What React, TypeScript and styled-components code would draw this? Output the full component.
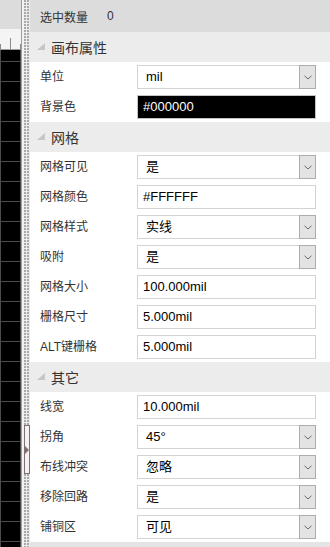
import React from "react";
import styled, { createGlobalStyle } from "styled-components";

const Global = createGlobalStyle`
  html, body { margin: 0; padding: 0; background: #ffffff; }
  body { font-family: "Liberation Sans", "Noto Sans CJK SC", sans-serif; }
  * { box-sizing: border-box; }
`;

const Shell = styled.div`
  display: flex;
  width: 330px;
  height: 547px;
  overflow: hidden;
  background: #ffffff;
`;

const Canvas = styled.div`
  width: 21px;
  display: flex;
  flex-direction: column;
  flex: none;
`;

const CanvasTop = styled.div`
  height: 29px;
  background: #dcdcdc;
`;

const Ruler = styled.div`
  height: 21px;
  background: #f4f4f4;
  border-bottom: 1px solid #9a9a9a;
  display: block;
`;

const Board = styled.div`
  flex: 1;
  background-color: #000000;
  background-image:
    linear-gradient(to bottom, #4c4c4c 0, #4c4c4c 1px, transparent 1px),
    linear-gradient(to right, #4c4c4c 0, #4c4c4c 1px, transparent 1px);
  background-size: 20px 20px, 20px 20px;
  background-position: 0 11px, 20px 0;
`;

const Divider = styled.div`
  width: 1px;
  flex: none;
  background: #9c9c9c;
`;

const Gap = styled.div`
  width: 2px;
  flex: none;
  background: #f2f2f2;
`;

const Splitter = styled.div`
  position: relative;
  width: 6px;
  flex: none;
  background-color: #ececec;
  background-image: radial-gradient(circle at 1px 1px, #a9a9a9 0.75px, transparent 0.9px);
  background-size: 3px 3px;
`;

const Handle = styled.div`
  position: absolute;
  left: 0;
  top: 425px;
  width: 6px;
  height: 49px;
  border: 1px solid #7c7070;
  background: #f6f0f0;
  display: flex;
  align-items: center;
  justify-content: center;
`;

const Panel = styled.div`
  flex: 1;
  display: flex;
  flex-direction: column;
`;

const Summary = styled.div`
  height: 32px;
  background: #dcdcdc;
  display: grid;
  grid-template-columns: 67px 1fr;
  align-items: center;
  padding-left: 10px;
  font-size: 12px;
  color: #333333;
`;

const SummaryValue = styled.span`
  font-family: "Liberation Sans", sans-serif;
  font-size: 12px;
  color: #333333;
`;

const SectionHeader = styled.div`
  height: 30px;
  background: #ececec;
  display: flex;
  align-items: center;
  padding-left: 7px;
  gap: 5px;
  font-size: 14px;
  color: #333333;
`;

const Row = styled.div`
  height: 30px;
  display: grid;
  grid-template-columns: 97px 179px;
  align-items: center;
  padding-left: 10px;
`;

const Label = styled.span`
  font-size: 12px;
  color: #333333;
  line-height: 16px;
  white-space: nowrap;
`;

const Field = styled.div<{ $dark?: boolean }>`
  height: 24px;
  border: 1px solid ${(p) => (p.$dark ? "#c4c4c4" : "#d3d3d3")};
  background: ${(p) => (p.$dark ? "#000000" : "#ffffff")};
  color: ${(p) => (p.$dark ? "#ffffff" : "#000000")};
  font-size: 13px;
  line-height: 22px;
  padding-left: 5px;
  white-space: nowrap;
`;

const Select = styled.div`
  height: 24px;
  display: flex;
`;

const SelectText = styled.div`
  flex: 1;
  border: 1px solid #d3d3d3;
  border-right: none;
  font-size: 13px;
  line-height: 22px;
  padding-left: 8px;
  color: #000000;
  white-space: nowrap;
`;

const SelectButton = styled.div`
  width: 17px;
  border: 1px solid #adadad;
  background: #e3e3e3;
  display: flex;
  align-items: center;
  justify-content: center;
`;

const Footer = styled.div`
  flex: 1;
  background: #e4e4e4;
`;

const Chevron = () => (
  <svg width="8" height="5" viewBox="0 0 8 5">
    <path d="M0.5 0.8 L4 4 L7.5 0.8" fill="none" stroke="#6a6a6a" strokeWidth="1" />
  </svg>
);

const Corner = () => (
  <svg width="9" height="8" viewBox="0 0 9 8">
    <polygon points="8,0 8,7 0,7" fill="#c6c6c6" />
  </svg>
);

type Prop =
  | { label: string; kind: "select"; value: string }
  | { label: string; kind: "input"; value: string; dark?: boolean };

const sections: { title: string; props: Prop[] }[] = [
  {
    title: "画布属性",
    props: [
      { label: "单位", kind: "select", value: "mil" },
      { label: "背景色", kind: "input", value: "#000000", dark: true },
    ],
  },
  {
    title: "网格",
    props: [
      { label: "网格可见", kind: "select", value: "是" },
      { label: "网格颜色", kind: "input", value: "#FFFFFF" },
      { label: "网格样式", kind: "select", value: "实线" },
      { label: "吸附", kind: "select", value: "是" },
      { label: "网格大小", kind: "input", value: "100.000mil" },
      { label: "栅格尺寸", kind: "input", value: "5.000mil" },
      { label: "ALT键栅格", kind: "input", value: "5.000mil" },
    ],
  },
  {
    title: "其它",
    props: [
      { label: "线宽", kind: "input", value: "10.000mil" },
      { label: "拐角", kind: "select", value: "45°" },
      { label: "布线冲突", kind: "select", value: "忽略" },
      { label: "移除回路", kind: "select", value: "是" },
      { label: "铺铜区", kind: "select", value: "可见" },
    ],
  },
];

export default function App() {
  return (
    <>
      <Global />
      <Shell>
        <Canvas>
          <CanvasTop />
          <Ruler>
            <svg width="21" height="20" viewBox="0 0 21 20">
              <line x1="0.5" y1="15" x2="0.5" y2="20" stroke="#8a8a8a" strokeWidth="1" />
              <line x1="10.5" y1="9" x2="10.5" y2="20" stroke="#8a8a8a" strokeWidth="1" />
              <line x1="20.5" y1="15" x2="20.5" y2="20" stroke="#8a8a8a" strokeWidth="1" />
            </svg>
          </Ruler>
          <Board />
        </Canvas>
        <Divider />
        <Gap />
        <Splitter>
          <Handle>
            <svg width="4" height="8" viewBox="0 0 4 8">
              <polygon points="0,0 4,4 0,8" fill="#7c7070" />
            </svg>
          </Handle>
        </Splitter>
        <Panel>
          <Summary>
            <span>选中数量</span>
            <SummaryValue>0</SummaryValue>
          </Summary>
          {sections.map((s) => (
            <React.Fragment key={s.title}>
              <SectionHeader>
                <Corner />
                <span>{s.title}</span>
              </SectionHeader>
              {s.props.map((p) => (
                <Row key={p.label}>
                  <Label>{p.label}</Label>
                  {p.kind === "select" ? (
                    <Select>
                      <SelectText>{p.value}</SelectText>
                      <SelectButton>
                        <Chevron />
                      </SelectButton>
                    </Select>
                  ) : (
                    <Field $dark={p.dark}>{p.value}</Field>
                  )}
                </Row>
              ))}
            </React.Fragment>
          ))}
          <Footer />
        </Panel>
      </Shell>
    </>
  );
}
